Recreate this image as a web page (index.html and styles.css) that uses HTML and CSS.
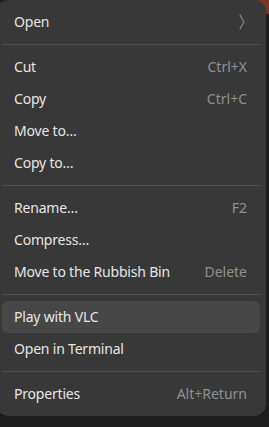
FILE: index.html
```html
<!DOCTYPE html>
<html lang="en">
<head>
<meta charset="utf-8">
<link rel="stylesheet" href="styles.css">
</head>
<body>
<div class="menu">
  <div class="item"><span class="label">Open</span>
    <svg class="chev" width="6" height="16" viewBox="0 0 6 16"><path d="M0.8 0.8 L5 8 L0.8 15.2" fill="none" stroke="#8a8a8a" stroke-width="1.1"/></svg>
  </div>
  <div class="sep"></div>
  <div class="item"><span class="label">Cut</span><span class="accel">Ctrl+X</span></div>
  <div class="item"><span class="label">Copy</span><span class="accel">Ctrl+C</span></div>
  <div class="item"><span class="label">Move to…</span></div>
  <div class="item"><span class="label">Copy to…</span></div>
  <div class="sep"></div>
  <div class="item"><span class="label">Rename…</span><span class="accel">F2</span></div>
  <div class="item"><span class="label">Compress…</span></div>
  <div class="item"><span class="label">Move to the Rubbish Bin</span><span class="accel">Delete</span></div>
  <div class="sep"></div>
  <div class="item hover"><span class="label">Play with VLC</span></div>
  <div class="item"><span class="label">Open in Terminal</span></div>
  <div class="sep"></div>
  <div class="item"><span class="label">Properties</span><span class="accel">Alt+Return</span></div>
</div>
</body>
</html>
```
FILE: styles.css
```css
html {
  background: linear-gradient(#7a3520, #7a3520) no-repeat right top / 14px 14px, #1e1e1e;
}
body {
  margin: 0;
  font-family: "Noto Sans", sans-serif;
  font-size: 14px;
  color: #e6e6e6;
}
.menu {
  margin-left: -4px;
  width: 270px;
  box-sizing: border-box;
  padding: 6px;
  background: #383838;
  border-radius: 12px;
  box-shadow: 0 1px 0 #191919;
}
.item {
  height: 32px;
  display: flex;
  align-items: center;
  justify-content: space-between;
  padding: 0 13px 1px 12px;
  box-sizing: border-box;
  border-radius: 6px;
}
.label {
  letter-spacing: -0.2px;
}
.item.hover {
  background: #474747;
}
.accel {
  color: #919191;
}
.chev {
  margin-right: 2px;
}
.sep {
  height: 1px;
  background: #505050;
  margin: 6px 0;
}
```
